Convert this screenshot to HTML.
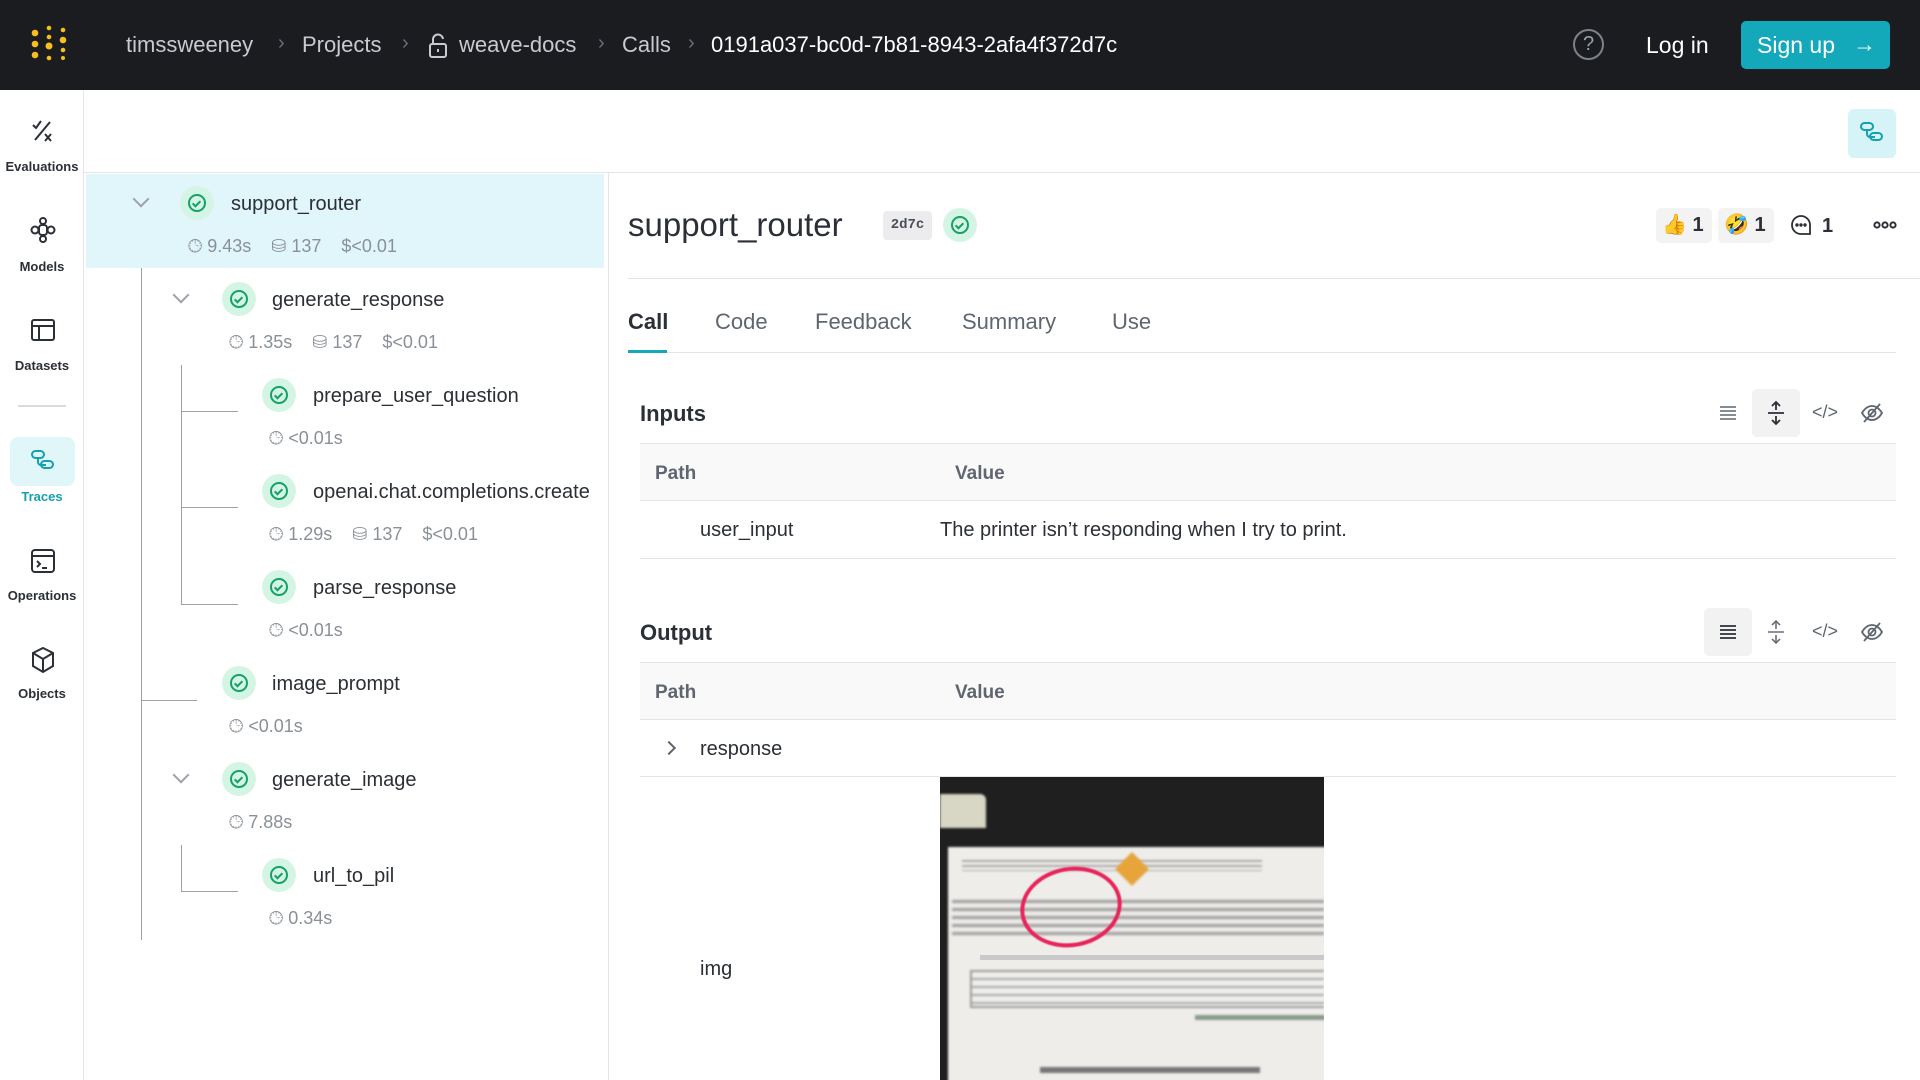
<!DOCTYPE html>
<html><head><meta charset="utf-8"><style>
*{box-sizing:border-box;margin:0;padding:0}
body{width:1920px;height:1080px;overflow:hidden;background:#fff;font-family:"Liberation Sans",sans-serif;color:#2b2f36;position:relative}
.a{position:absolute}
.hdr{left:0;top:0;width:1920px;height:90px;background:#1b1c20}
.bc{top:32px;font-size:22px;color:#c7cbd1;white-space:nowrap}
.chev{top:32px;font-size:20px;color:#6b7078}
.nav{left:0;top:90px;width:84px;height:990px;border-right:1px solid #e4e5e7}
.nl{width:84px;text-align:center;font-size:13px;font-weight:bold;color:#2b2f36;left:0}
.ni{left:30px}
.tree{left:84px;top:173px;width:525px;height:907px;border-right:1px solid #e4e5e7}
.nm{font-size:20px;color:#2b2f36;white-space:nowrap}
.mt{font-size:18px;color:#8a9099;white-space:nowrap}
.ck{width:34px;height:34px;border-radius:50%;background:#d4f5e3}
.ck::after{content:"";position:absolute;left:8px;top:8px;width:14px;height:14px;border:2px solid #16a06a;border-radius:50%}
.ck::before{content:"";position:absolute;left:14px;top:13px;width:3px;height:6px;border-right:2px solid #16a06a;border-bottom:2px solid #16a06a;transform:rotate(45deg);z-index:1}
.vl{background:#9da2a9;width:1px}
.hl{background:#9da2a9;height:1px}
.cv{width:12px;height:12px;border-right:2px solid #9da2a9;border-bottom:2px solid #9da2a9;transform:rotate(45deg)}
.tab{top:309px;font-size:22px;color:#5f6670}
.th{background:#f9f9f9;border-top:1px solid #e4e5e7;border-bottom:1px solid #e4e5e7;left:640px;width:1256px}
.tt{font-size:19px;color:#5f6670;font-weight:bold}
.td{font-size:20px;color:#2b2f36}
.ic{color:#5f6670}
</style></head><body>
<div class="a hdr"></div>
<svg class="a" style="left:30px;top:24px" width="44" height="40" viewBox="0 0 44 40"><g fill="#f6bf21"><circle cx="5" cy="9" r="3.3"/><circle cx="5" cy="20" r="3.3"/><circle cx="5" cy="31" r="3.3"/><circle cx="19" cy="4" r="2.3"/><circle cx="19" cy="13" r="2.3"/><circle cx="19" cy="22" r="3.5"/><circle cx="19" cy="34" r="2.3"/><circle cx="33" cy="6" r="2.3"/><circle cx="33" cy="16" r="3.3"/><circle cx="33" cy="26" r="2.3"/><circle cx="33" cy="34" r="2"/></g></svg>
<div class="a bc" style="left:126px">timssweeney</div>
<div class="a chev" style="left:278px">›</div>
<div class="a bc" style="left:302px">Projects</div>
<div class="a chev" style="left:402px">›</div>
<svg class="a" style="left:428px;top:33px" width="20" height="26" viewBox="0 0 20 26" fill="none" stroke="#c7cbd1" stroke-width="2"><rect x="2" y="11" width="16" height="13" rx="2"/><path d="M5 11V7a5 5 0 0 1 10 -1"/><path d="M10 16v3"/></svg>
<div class="a bc" style="left:459px">weave-docs</div>
<div class="a chev" style="left:598px">›</div>
<div class="a bc" style="left:622px">Calls</div>
<div class="a chev" style="left:688px">›</div>
<div class="a bc" style="left:711px;color:#fff">0191a037-bc0d-7b81-8943-2afa4f372d7c</div>
<div class="a" style="left:1573px;top:29px;width:31px;height:31px;border:2px solid #7d828a;border-radius:50%;color:#9aa0a8;font-size:20px;text-align:center;line-height:27px">?</div>
<div class="a" style="left:1646px;top:32px;font-size:23px;color:#fff">Log in</div>
<div class="a" style="left:1741px;top:21px;width:149px;height:48px;background:#13a9ba;border-radius:5px;color:#fff;font-size:23px;line-height:48px;padding-left:16px">Sign up<span style="position:absolute;left:112px;top:-1px">→</span></div>

<div class="a nav"></div>
<svg class="a ni" style="top:118px" width="26" height="26" viewBox="0 0 26 26" fill="none" stroke="#2b2f36" stroke-width="2"><path d="M3 7l3 3 5-7M5 22L20 4M15 16l6 7M21 16l-6 7"/></svg>
<div class="a nl" style="top:159px">Evaluations</div>
<svg class="a ni" style="top:216px" width="26" height="28" viewBox="0 0 26 28" fill="none" stroke="#2b2f36" stroke-width="2"><circle cx="13" cy="5" r="3"/><circle cx="13" cy="23" r="3"/><circle cx="5" cy="14" r="3.5"/><circle cx="21" cy="14" r="3.5"/><rect x="9" y="9" width="8" height="10" rx="3"/></svg>
<div class="a nl" style="top:259px">Models</div>
<svg class="a ni" style="top:318px" width="26" height="24" viewBox="0 0 26 24" fill="none" stroke="#2b2f36" stroke-width="2"><rect x="2" y="2" width="22" height="20" rx="2"/><path d="M2 8h22M9 8v14"/></svg>
<div class="a nl" style="top:358px">Datasets</div>
<div class="a" style="left:18px;top:405px;width:48px;height:2px;background:#d9dbde"></div>
<div class="a" style="left:10px;top:437px;width:65px;height:49px;background:#e1f6f9;border-radius:8px"></div>
<svg class="a ni" style="top:449px" width="26" height="24" viewBox="0 0 26 24" fill="none" stroke="#13a0b2" stroke-width="2"><rect x="2" y="2" width="12" height="7" rx="3.5"/><path d="M8 9v4a3 3 0 0 0 3 3h5"/><rect x="11" y="12" width="12" height="7" rx="3.5"/></svg>
<div class="a nl" style="top:489px;color:#13a0b2">Traces</div>
<svg class="a ni" style="top:548px" width="26" height="26" viewBox="0 0 26 26" fill="none" stroke="#2b2f36" stroke-width="2"><rect x="2" y="2" width="22" height="22" rx="3"/><path d="M2 8h22M7 13l3 3-3 3M12 20h5"/></svg>
<div class="a nl" style="top:588px">Operations</div>
<svg class="a ni" style="top:646px" width="26" height="28" viewBox="0 0 26 28" fill="none" stroke="#2b2f36" stroke-width="2"><path d="M13 2l10 5v13l-10 6-10-6V7z"/><path d="M3 7l10 6 10-6M13 13v13"/></svg>
<div class="a nl" style="top:686px">Objects</div>

<div class="a" style="left:84px;top:172px;width:1836px;height:1px;background:#e4e5e7"></div>
<div class="a" style="left:1848px;top:109px;width:48px;height:49px;background:#d6f3f7;border-radius:6px"></div>
<svg class="a" style="left:1859px;top:121px" width="26" height="24" viewBox="0 0 26 24" fill="none" stroke="#13a0b2" stroke-width="2"><rect x="2" y="2" width="12" height="7" rx="3.5"/><path d="M8 9v4a3 3 0 0 0 3 3h5"/><rect x="11" y="12" width="12" height="7" rx="3.5"/></svg>

<div class="a tree"></div>
<div class="a" style="left:86px;top:174px;width:518px;height:94px;background:#e1f6fa"></div>
<div class="a vl" style="left:141px;top:268px;height:672px"></div>
<div class="a hl" style="left:141px;top:700px;width:56px"></div>
<div class="a vl" style="left:181px;top:365px;height:239px"></div>
<div class="a hl" style="left:181px;top:411px;width:57px"></div>
<div class="a hl" style="left:181px;top:507px;width:57px"></div>
<div class="a hl" style="left:181px;top:604px;width:57px"></div>
<div class="a vl" style="left:181px;top:845px;height:46px"></div>
<div class="a hl" style="left:181px;top:891px;width:57px"></div>

<div class="a cv" style="left:135px;top:193px"></div>
<div class="a ck" style="left:180px;top:186px"></div>
<div class="a nm" style="left:231px;top:193px">support_router</div>
<div class="a mt" style="left:188px;top:236px">🕒︎ 9.43s &nbsp;&nbsp; ⛁ 137 &nbsp;&nbsp; $&lt;0.01</div>

<div class="a cv" style="left:175px;top:289px"></div>
<div class="a ck" style="left:222px;top:282px"></div>
<div class="a nm" style="left:272px;top:289px">generate_response</div>
<div class="a mt" style="left:229px;top:332px">🕒︎ 1.35s &nbsp;&nbsp; ⛁ 137 &nbsp;&nbsp; $&lt;0.01</div>

<div class="a ck" style="left:262px;top:378px"></div>
<div class="a nm" style="left:313px;top:385px">prepare_user_question</div>
<div class="a mt" style="left:269px;top:428px">🕒︎ &lt;0.01s</div>

<div class="a ck" style="left:262px;top:474px"></div>
<div class="a nm" style="left:313px;top:481px">openai.chat.completions.create</div>
<div class="a mt" style="left:269px;top:524px">🕒︎ 1.29s &nbsp;&nbsp; ⛁ 137 &nbsp;&nbsp; $&lt;0.01</div>

<div class="a ck" style="left:262px;top:570px"></div>
<div class="a nm" style="left:313px;top:577px">parse_response</div>
<div class="a mt" style="left:269px;top:620px">🕒︎ &lt;0.01s</div>

<div class="a ck" style="left:222px;top:666px"></div>
<div class="a nm" style="left:272px;top:673px">image_prompt</div>
<div class="a mt" style="left:229px;top:716px">🕒︎ &lt;0.01s</div>

<div class="a cv" style="left:175px;top:769px"></div>
<div class="a ck" style="left:222px;top:762px"></div>
<div class="a nm" style="left:272px;top:769px">generate_image</div>
<div class="a mt" style="left:229px;top:812px">🕒︎ 7.88s</div>

<div class="a ck" style="left:262px;top:858px"></div>
<div class="a nm" style="left:313px;top:865px">url_to_pil</div>
<div class="a mt" style="left:269px;top:908px">🕒︎ 0.34s</div>

<div class="a" style="left:628px;top:206px;font-size:33px;color:#2b2f36">support_router</div>
<div class="a" style="left:883px;top:211px;width:49px;height:29px;background:#ececee;border-radius:4px;font-family:'Liberation Mono',monospace;font-size:14px;font-weight:bold;line-height:29px;text-align:center;color:#4b5058">2d7c</div>
<div class="a ck" style="left:943px;top:208px"></div>
<div class="a" style="left:1656px;top:208px;width:56px;height:35px;background:#f3f3f4;border-radius:5px;font-size:20px;line-height:35px;padding-left:6px">👍<span style="font-weight:bold;color:#2b2f36"> 1</span></div>
<div class="a" style="left:1718px;top:208px;width:56px;height:35px;background:#f3f3f4;border-radius:5px;font-size:20px;line-height:35px;padding-left:6px">🤣<span style="font-weight:bold"> 1</span></div>
<svg class="a" style="left:1790px;top:214px" width="22" height="22" viewBox="0 0 22 22" fill="none" stroke="#2b2f36" stroke-width="1.8"><path d="M11 2a9 9 0 1 0 0 18h9v-9a9 9 0 0 0-9-9z"/><circle cx="7" cy="11" r=".8" fill="#2b2f36"/><circle cx="11" cy="11" r=".8" fill="#2b2f36"/><circle cx="15" cy="11" r=".8" fill="#2b2f36"/></svg>
<div class="a" style="left:1822px;top:215px;font-size:20px;font-weight:bold">1</div>
<svg class="a" style="left:1873px;top:219px" width="24" height="12" viewBox="0 0 24 12" fill="none" stroke="#2b2f36" stroke-width="2"><circle cx="4" cy="6" r="2.6"/><circle cx="12" cy="6" r="2.6"/><circle cx="20" cy="6" r="2.6"/></svg>
<div class="a" style="left:628px;top:278px;width:1292px;height:1px;background:#e4e5e7"></div>

<div class="a tab" style="left:628px;color:#2b2f36;font-weight:bold">Call</div>
<div class="a tab" style="left:715px">Code</div>
<div class="a tab" style="left:815px">Feedback</div>
<div class="a tab" style="left:962px">Summary</div>
<div class="a tab" style="left:1112px">Use</div>
<div class="a" style="left:628px;top:352px;width:1268px;height:1px;background:#e4e5e7"></div>
<div class="a" style="left:628px;top:350px;width:39px;height:3px;background:#13a9ba"></div>

<div class="a" style="left:640px;top:401px;font-size:22px;font-weight:bold">Inputs</div>
<div class="a" style="left:1752px;top:389px;width:48px;height:48px;background:#f2f2f3;border-radius:5px"></div>
<svg class="a" style="left:1718px;top:403px" width="20" height="20" viewBox="0 0 20 20" stroke="#5f6670" stroke-width="1.6"><path d="M2 4h16M2 8h16M2 12h16M2 16h16"/></svg>
<svg class="a" style="left:1766px;top:400px" width="20" height="26" viewBox="0 0 20 26" fill="none" stroke="#2b2f36" stroke-width="1.8"><path d="M10 2v8M6 6l4-4 4 4M2 13h16M10 16v8M6 20l4 4 4-4"/></svg>
<div class="a ic" style="left:1812px;top:402px;font-size:18px">&lt;/&gt;</div>
<svg class="a" style="left:1860px;top:401px" width="24" height="24" viewBox="0 0 24 24" fill="none" stroke="#5f6670" stroke-width="1.8"><path d="M2 12c3-5 6-7 10-7s7 2 10 7c-3 5-6 7-10 7s-7-2-10-7z"/><circle cx="12" cy="12" r="3.5"/><path d="M20 3L4 21"/></svg>
<div class="a th" style="top:443px;height:58px"></div>
<div class="a tt" style="left:655px;top:463px">Path</div>
<div class="a tt" style="left:955px;top:463px">Value</div>
<div class="a td" style="left:700px;top:519px">user_input</div>
<div class="a td" style="left:940px;top:519px">The printer isn’t responding when I try to print.</div>
<div class="a" style="left:640px;top:558px;width:1256px;height:1px;background:#e4e5e7"></div>

<div class="a" style="left:640px;top:620px;font-size:22px;font-weight:bold">Output</div>
<div class="a" style="left:1704px;top:608px;width:48px;height:48px;background:#f2f2f3;border-radius:5px"></div>
<svg class="a" style="left:1718px;top:622px" width="20" height="20" viewBox="0 0 20 20" stroke="#2b2f36" stroke-width="1.8"><path d="M2 4h16M2 8h16M2 12h16M2 16h16"/></svg>
<svg class="a" style="left:1766px;top:619px" width="20" height="26" viewBox="0 0 20 26" fill="none" stroke="#6b7078" stroke-width="1.6"><path d="M10 2v8M6 6l4-4 4 4M2 13h16M10 16v8M6 20l4 4 4-4"/></svg>
<div class="a ic" style="left:1812px;top:621px;font-size:18px">&lt;/&gt;</div>
<svg class="a" style="left:1860px;top:620px" width="24" height="24" viewBox="0 0 24 24" fill="none" stroke="#5f6670" stroke-width="1.8"><path d="M2 12c3-5 6-7 10-7s7 2 10 7c-3 5-6 7-10 7s-7-2-10-7z"/><circle cx="12" cy="12" r="3.5"/><path d="M20 3L4 21"/></svg>
<div class="a th" style="top:662px;height:58px"></div>
<div class="a tt" style="left:655px;top:682px">Path</div>
<div class="a tt" style="left:955px;top:682px">Value</div>
<div class="a" style="left:664px;top:743px;width:10px;height:10px;border-right:2px solid #5f6670;border-top:2px solid #5f6670;transform:rotate(45deg)"></div>
<div class="a td" style="left:700px;top:738px">response</div>
<div class="a" style="left:640px;top:776px;width:1256px;height:1px;background:#e4e5e7"></div>
<div class="a td" style="left:700px;top:958px">img</div>

<div class="a" style="left:940px;top:777px;width:384px;height:303px;background:#1f1f1f;overflow:hidden">
 <div class="a" style="left:0;top:17px;width:46px;height:34px;background:#d8d6c4;border-radius:0 6px 0 0;filter:blur(1px)"></div>
 <div class="a" style="left:8px;top:70px;width:380px;height:240px;background:#eeedea;filter:blur(1px)"></div>
 <div class="a" style="left:22px;top:80px;width:300px;height:14px;background:repeating-linear-gradient(#eeedea 0 3px,#8d8d8d 3px 5px);filter:blur(1px);opacity:.7"></div>
 <div class="a" style="left:12px;top:118px;width:372px;height:40px;background:repeating-linear-gradient(#eeedea 0 5px,#7a7a7a 5px 8px);filter:blur(1.2px);opacity:.7"></div>
 <div class="a" style="left:30px;top:193px;width:354px;height:38px;border:2px solid #888;border-right:none;background:repeating-linear-gradient(#f0efec 0 6px,#999 6px 8px);filter:blur(1px);opacity:.8"></div>
 <div class="a" style="left:40px;top:178px;width:344px;height:5px;background:#c9c9c9"></div>
 <div class="a" style="left:180px;top:80px;width:24px;height:24px;background:#e6a43b;transform:rotate(45deg);filter:blur(1px)"></div>
 <div class="a" style="left:80px;top:90px;width:102px;height:80px;border:4px solid #e8245a;border-radius:50%;transform:rotate(-10deg);filter:blur(.6px)"></div>
 <div class="a" style="left:255px;top:238px;width:130px;height:5px;background:#8a9a8a;filter:blur(1px)"></div>
 <div class="a" style="left:100px;top:290px;width:220px;height:6px;background:#777;filter:blur(1px)"></div>
</div>
</body></html>
